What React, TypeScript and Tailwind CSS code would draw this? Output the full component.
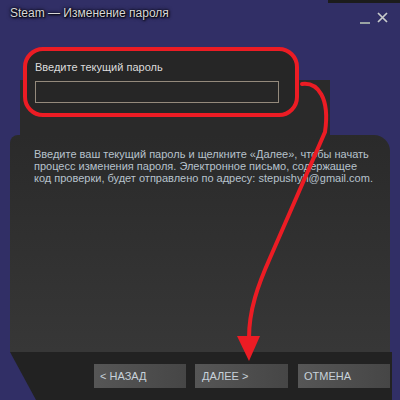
const dither = "bg-[#312f66]";

function WindowControls() {
  return (
    <div className="flex items-start gap-[6px] pt-[7px] pr-[11px]">
      {/* minimize */}
      <svg width="11" height="14" viewBox="0 0 11 14" className="mt-[3px]">
        <rect x="0" y="9" width="10" height="2" fill="#9aa3a3" />
      </svg>
      {/* close */}
      <svg width="12" height="12" viewBox="0 0 12 12" className="mt-[2px]">
        <path d="M1 1 L10 10 M10 1 L1 10" stroke="#c8cccc" strokeWidth="1.7" />
      </svg>
    </div>
  );
}

function Arrow() {
  return (
    <svg
      className="absolute inset-0 pointer-events-none"
      width="400"
      height="400"
      viewBox="0 0 400 400"
    >
      <path
        d="M302 84 C318 82 330 98 325 132 L270 258 C258 285 249 310 249 338"
        fill="none"
        stroke="#ec1c24"
        strokeWidth="4"
        strokeLinecap="round"
      />
      <polygon points="237,336 260,336 249,361" fill="#ec1c24" />
    </svg>
  );
}

export default function App() {
  return (
    <div
      className={`relative w-[400px] h-[400px] overflow-hidden flex flex-col ${dither} [font-family:'Liberation_Sans',Arial,sans-serif]`}
    >
      {/* Title bar */}
      <div className="h-[45px] flex flex-col">
        <div className="flex justify-end">
          <div className="w-[72px] h-[3px] bg-[#1c1c1c]" />
        </div>
        <div className="flex justify-between">
          <span className="ml-[10px] mt-[2px] h-[17px] text-[12px] leading-[17px] text-[#d8d8d8] [text-shadow:0_0_2px_#000,0_0_4px_#000,1px_1px_2px_#000]">
            Steam — Изменение пароля
          </span>
          <WindowControls />
        </div>
      </div>

      {/* Password field, outlined */}
      <div className="h-[90px] flex">
        <div className="w-[20px]" />
        <div className="w-[310px] bg-[linear-gradient(transparent_35px,#2a2a2a_35px)] rounded-tr-[22px]">
          <div className="ml-[3px] mt-[2px] w-[276px] h-[70px] rounded-[20px] border-4 border-[#ec1c24] bg-[#262626] px-[8px] pt-[10px]">
            <div className="text-[11px] leading-[12px] text-[#dcdcdc]">Введите текущий пароль</div>
            <div className="mt-[8px] w-[244px] h-[22px] border border-[#948a7c] bg-[#262626]" />
          </div>
        </div>
      </div>

      {/* Description panel */}
      <div className="mx-[10px] h-[217px] rounded-tl-[8px] rounded-tr-[16px] bg-gradient-to-b from-[#2a2a2a] to-[#373737] pl-[24px] pt-[13px]">
        <p className="text-[11px] leading-[12px] text-[#b7c2cc]">
          Введите ваш текущий пароль и щелкните «Далее», чтобы начать
          <br />
          процесс изменения пароля. Электронное письмо, содержащее
          <br />
          код проверки, будет отправлено по адресу: stepushyh@gmail.com.
        </p>
      </div>

      {/* Footer buttons */}
      <div className="ml-[10px] mr-[8px] h-[48px] flex bg-[#222222]">
        <div className={`w-[26px] self-stretch ${dither} [clip-path:polygon(0_0,100%_100%,0_100%)]`} />
        <div className="ml-[58px] mt-[12px] flex gap-[9px]">
          <button className="w-[92px] h-[24px] bg-gradient-to-r from-[#565656] to-[#464646] text-left pl-[6px] text-[11px] text-[#c8d2da]">
            &lt; НАЗАД
          </button>
          <button className="w-[93px] h-[24px] bg-gradient-to-r from-[#565656] to-[#464646] text-left pl-[7px] text-[11px] text-[#c8d2da]">
            ДАЛЕЕ &gt;
          </button>
          <button className="ml-[1px] w-[92px] h-[24px] bg-gradient-to-r from-[#565656] to-[#464646] text-left pl-[6px] text-[11px] text-[#c8d2da]">
            ОТМЕНА
          </button>
        </div>
      </div>

      <Arrow />
    </div>
  );
}
